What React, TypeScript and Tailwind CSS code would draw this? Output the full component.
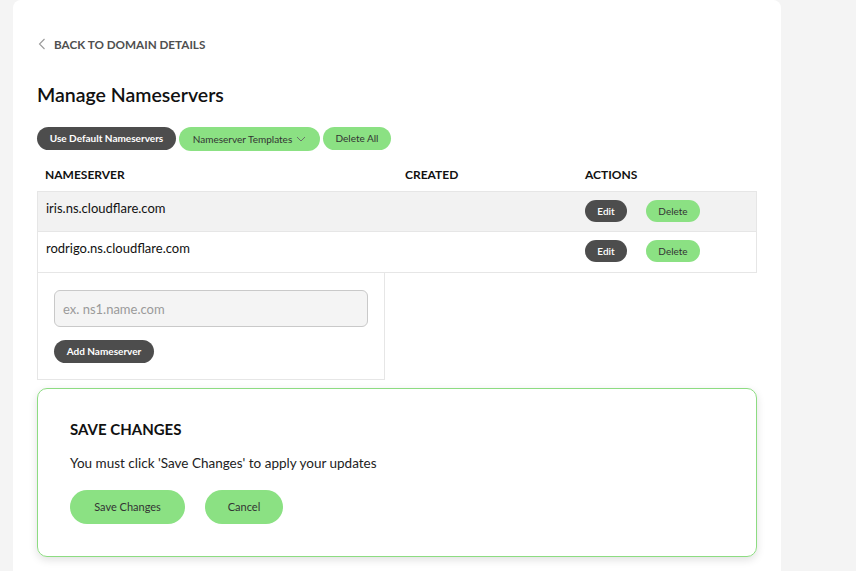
import React from 'react';

const rows = ['iris.ns.cloudflare.com', 'rodrigo.ns.cloudflare.com'];

function Pill({ dark, className = '', children }: { dark?: boolean; className?: string; children: React.ReactNode }) {
  return (
    <button
      className={`inline-flex items-center justify-center rounded-full text-[10px] ${
        dark ? 'bg-[#4d4d4d] text-white font-bold' : 'bg-[#8be183] text-[#333]'
      } ${className}`}
    >
      {children}
    </button>
  );
}

export default function App() {
  return (
    <div className="min-h-screen bg-[#f4f4f4] pl-[13px] font-['Lato',sans-serif] text-[#111]">
      <div className="w-[768px] min-h-[571px] bg-white rounded-t-lg px-6 pt-[36px] pb-4">
        {/* back link */}
        <a className="flex items-center gap-[8px] text-[11.7px] font-bold text-[#4f4f4f] leading-4">
          <svg width="8" height="12" viewBox="0 0 8 12" className="ml-[1px]">
            <path d="M6.5 1 1.5 6l5 5" fill="none" stroke="#9a9a9a" strokeWidth="1.1" />
          </svg>
          BACK TO DOMAIN DETAILS
        </a>

        <h1 className="mt-[29px] text-[19.5px] font-semibold leading-7">Manage Nameservers</h1>

        <div className="mt-[18px] flex gap-[3px]">
          <Pill dark className="h-[23px] w-[139px]">Use Default Nameservers</Pill>
          <Pill className="h-[24px] w-[141px] gap-1">
            Nameserver Templates
            <svg width="10" height="6" viewBox="0 0 10 6">
              <path d="M1 1l4 4 4-4" fill="none" stroke="#666" strokeWidth="0.9" />
            </svg>
          </Pill>
          <Pill className="h-[23px] w-[68px]">Delete All</Pill>
        </div>

        {/* table */}
        <div className="mt-[16px] w-[720px]">
          <div className="grid grid-cols-[360px_180px_180px] text-[12px] font-bold leading-4 pb-[8px]">
            <div className="px-2">NAMESERVER</div>
            <div className="px-2">CREATED</div>
            <div className="px-2">ACTIONS</div>
          </div>
          {rows.map((r, i) => (
            <div
              key={r}
              className={`grid grid-cols-[360px_180px_180px] h-[41px] border border-[#e6e6e6] ${
                i === 0 ? 'bg-[#f2f2f2]' : 'bg-white border-t-0'
              } text-[13px]`}
            >
              <div className="px-2 pt-[8px] leading-4">{r}</div>
              <div />
              <div className="pl-[7px] pt-[8px] flex items-start gap-[19px]">
                <Pill dark className="h-[22px] w-[42px] font-semibold">Edit</Pill>
                <Pill className="h-[22px] w-[54px]">Delete</Pill>
              </div>
            </div>
          ))}
          <div className="w-[348px] border border-t-0 border-[#e6e6e6] px-4 pt-[17px] pb-[16px]">
            <input
              placeholder="ex. ns1.name.com"
              className="block w-[314px] h-[37px] rounded-md border border-[#c9c9c9] bg-[#f4f4f4] px-2 text-[13px] placeholder:text-[#9a9a9a] outline-none"
            />
            <Pill dark className="mt-[13px] h-[23px] w-[100px]">Add Nameserver</Pill>
          </div>
        </div>

        {/* save changes */}
        <div className="mt-[8px] w-[720px] h-[169px] rounded-[10px] border border-[#8ddc82] shadow-[0_3px_8px_rgba(0,0,0,0.12)] px-8 pt-[30px]">
          <h2 className="text-[15px] font-bold leading-5">SAVE CHANGES</h2>
          <p className="mt-[14px] text-[13.5px] leading-5 text-[#222]">You must click 'Save Changes' to apply your updates</p>
          <div className="mt-[17px] flex gap-[20px]">
            <Pill className="h-[34px] w-[115px] text-[11px]">Save Changes</Pill>
            <Pill className="h-[34px] w-[78px] text-[11px]">Cancel</Pill>
          </div>
        </div>
      </div>
    </div>
  );
}
